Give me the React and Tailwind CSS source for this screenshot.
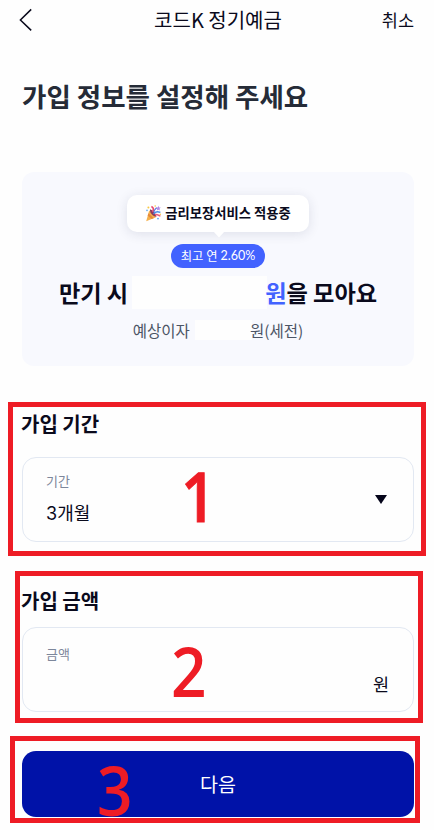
import clsx from 'clsx';

function PartyPopper() {
  return (
    <svg width="17" height="17" viewBox="0 0 17 17" fill="none" className="shrink-0">
      <path d="M4.2 5.6 11 12.2 1.2 16.2Z" fill="#f5b04c" />
      <path d="M3.5 8.2 8.7 13.2 6.6 14.1 2.6 10.6Z" fill="#e58a3c" />
      <path d="M5 4.2C7.5 5 11 8.3 11.6 11.6 9 12.4 4.2 8 5 4.2Z" fill="#8c3b5a" />
      <path d="M6.4 1.4C8.6 2.4 9 4.6 7.6 7.2" stroke="#e8476a" strokeWidth="1.7" />
      <path d="M8.6 9C10 6.4 12.6 6.2 15.4 7.4" stroke="#4a8fe7" strokeWidth="1.5" />
      <path d="M8.8 7.2C9 4.6 10.6 4.4 11.6 2.6" stroke="#5577d8" strokeWidth="1.3" />
      <path d="M10 9.8C12.4 8.8 13.4 10.6 15.4 11" stroke="#ef5f7c" strokeWidth="1.5" />
      <path d="m13.4.8.7 1.6 1.7.2-1.3 1.2.4 1.7-1.5-.8-1.5.8.3-1.7L11 2.6l1.7-.2Z" fill="#b18ae8" />
      <circle cx="3.4" cy="2.6" r="1" fill="#f7c744" />
      <circle cx="10.2" cy="1" r=".8" fill="#f7c744" />
      <circle cx="15.3" cy="9.2" r=".8" fill="#f7c744" />
      <circle cx="13" cy="13.6" r=".9" fill="#5aa7ef" />
      <circle cx="2" cy="5.4" r=".8" fill="#5aa7ef" />
    </svg>
  );
}

// red frame with a step number lying over its content
function Step({ no, className, noClassName, children }) {
  return (
    <section className={clsx('relative border-5 border-[#ee1c25]', className)}>
      {children}
      <span
        className={clsx(
          "absolute origin-left font-['Open_Sans',sans-serif] text-[69px] leading-[60px] text-[#ee1c25]",
          noClassName
        )}
      >
        {no}
      </span>
    </section>
  );
}

export default function App() {
  return (
    <main className="flex h-[830px] w-[434px] flex-col bg-[#fefefe] font-['Noto_Sans_CJK_KR',sans-serif] text-[#0a0a1c]">
      <header className="grid h-10 shrink-0 grid-cols-[100px_1fr_100px] items-center pr-5 pl-[18px]">
        <svg width="16" height="24" viewBox="0 0 16 24" fill="none" stroke="currentColor" strokeWidth="1.5">
          <path d="M13.2 1.4 2.4 12l10.8 10.4" />
        </svg>
        <h1 className="pl-[4px] text-center text-[20px] leading-10 whitespace-nowrap">코드K 정기예금</h1>
        <span className="text-right text-[17.5px] leading-[38px]">취소</span>
      </header>

      <h2 className="mt-9 ml-[22px] h-10 shrink-0 text-[26.5px] leading-10 font-bold whitespace-nowrap text-[#252b37]">
        가입 정보를 설정해 주세요
      </h2>

      <div className="mt-14 ml-[22px] flex h-[194px] w-[392px] shrink-0 flex-col items-center rounded-xl bg-[#f8f9fe] pt-[23px]">
        <div className="relative flex h-[37px] w-[182px] items-center justify-center gap-[3px] rounded-[10px] bg-white shadow-[0_2px_12px_rgba(30,40,80,0.12)]">
          <PartyPopper />
          <span className="-mt-px text-[13.3px] leading-5 font-bold whitespace-nowrap">금리보장서비스 적용중</span>
          <svg width="12" height="7" viewBox="0 0 12 7" className="absolute top-[36px] left-[86px]">
            <path d="M0 0h12L6 6.5Z" fill="#fff" />
          </svg>
        </div>
        <div className="mt-3 flex h-6 w-[94px] items-center justify-center gap-[3px] rounded-full bg-[#4262ff] text-[12.3px] whitespace-nowrap text-white">
          <span>최고 연</span>
          <span className="font-['Lato',sans-serif] text-[12.5px]">2.60%</span>
        </div>
        <div className="mt-2 flex h-[33px] items-center text-[23.2px] leading-[33px] font-bold whitespace-nowrap">
          <span>만기 시</span>
          <span className="ml-[4px] h-[33px] w-[135px] bg-[#fefefe]" />
          <span className="-ml-[2px] text-[#4262ff]">원</span>
          <span>을 모아요</span>
        </div>
        <div className="mt-[11px] flex h-5 items-center text-[15.5px] leading-5 whitespace-nowrap text-[#4c5565]">
          <span>예상이자</span>
          <span className="ml-[5px] h-5 w-[57px] bg-[#fefefe]" />
          <span className="-ml-[2px]">원(세전)</span>
        </div>
      </div>

      <Step
        no="1"
        className="mt-9 ml-2 h-[154px] w-[418px] shrink-0 pl-[9px]"
        noClassName="top-[58px] left-[168px] scale-x-88 font-semibold [-webkit-text-stroke:1px_#ee1c25]"
      >
        <h3 className="mt-0.5 -ml-px h-[30px] text-[20px] leading-[30px] font-bold">가입 기간</h3>
        <div className="mt-[18px] flex h-[85px] w-[392px] items-center justify-between rounded-[14px] border border-[#e2e8f2] pr-[26px] pl-[23px]">
          <div className="-mt-0.5">
            <p className="text-[13px] leading-5 text-[#7d879b]">기간</p>
            <p className="mt-[9px] text-[18px] leading-6">
              <span className="font-['Inter',sans-serif]">3</span>개월
            </p>
          </div>
          <svg width="12" height="9" viewBox="0 0 12 9">
            <path d="M0 0h12L6 9Z" fill="#05051a" />
          </svg>
        </div>
      </Step>

      <Step
        no="2"
        className="mt-[15px] ml-[15px] h-[152px] w-[408px] shrink-0 pl-[2px]"
        noClassName="top-[64px] left-[151px] scale-x-90 font-semibold"
      >
        <h3 className="mt-[10px] -ml-px h-[30px] text-[20px] leading-[30px] font-bold">가입 금액</h3>
        <div className="mt-[11px] h-[85px] w-[392px] rounded-[14px] border border-[#e2e8f2] pt-4 pr-6 pl-[23px]">
          <p className="text-[13px] leading-5 text-[#7d879b]">금액</p>
          <p className="mt-2 text-right text-[17.5px] leading-6">원</p>
        </div>
      </Step>

      <Step
        no="3"
        className="mt-[13px] ml-[10px] h-[87px] w-[410px] shrink-0 pt-[10px] pl-[7px]"
        noClassName="top-[18px] left-[82px] scale-x-90 font-semibold"
      >
        <button className="h-[66px] w-[392px] rounded-[14px] bg-[#0012a8] text-[19.5px] text-white">다음</button>
      </Step>
    </main>
  );
}
